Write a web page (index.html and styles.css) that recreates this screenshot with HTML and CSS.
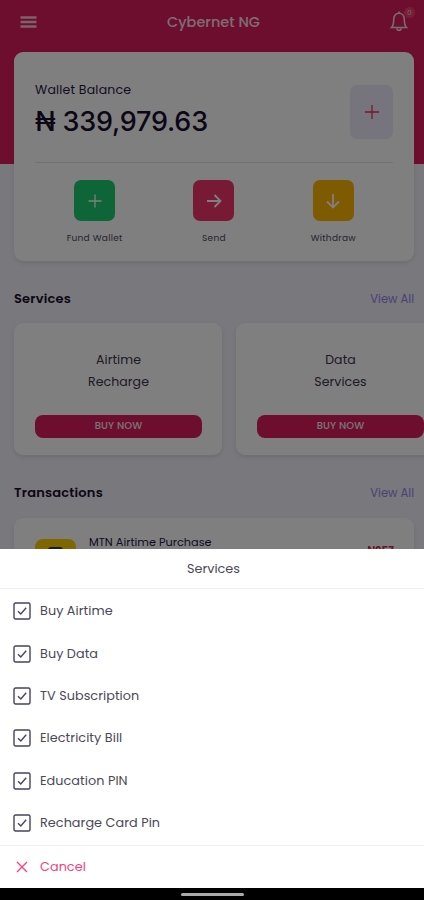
FILE: index.html
```html
<!DOCTYPE html>
<html lang="en">
<head>
<meta charset="utf-8">
<title>Cybernet NG</title>
<link rel="stylesheet" href="styles.css">
</head>
<body>
<div class="screen">
  <header class="topbar">
    <svg class="menu" viewBox="0 0 18 12"><path d="M.5 1.500h16M.5 6h16M.5 10.500h16"/></svg>
    <h1>Cybernet NG</h1>
    <div class="notify">
      <svg class="bell" viewBox="0 0 18 22"><path d="M1.500 16.500C3.300 14.800 3.700 12.500 3.700 8.500C3.700 4.800 5.800 2.300 9 2.300S14.300 4.800 14.300 8.500C14.300 12.500 14.700 14.800 16.500 16.500Z"/><path d="M6.500 17.500q2.500 4 5 0M9 .5v2"/></svg>
      <span class="badge">0</span>
    </div>
  </header>
  <section class="wallet card">
    <div class="balance">
      <div>
        <p class="label">Wallet Balance</p>
        <p class="amount">₦ 339,979.63</p>
      </div>
      <div class="add"><svg viewBox="0 0 16 16"><path d="M8 1v14M1 8h14"/></svg></div>
    </div>
    <div class="actions">
      <div class="action"><i class="tile green"><svg viewBox="0 0 16 16"><path class="thin" d="M8 1.500v13M1.500 8h13"/></svg></i><span>Fund Wallet</span></div>
      <div class="action"><i class="tile red"><svg viewBox="0 0 16 16"><path d="M1 8h13M8.500 2L14.500 8L8.500 14"/></svg></i><span>Send</span></div>
      <div class="action"><i class="tile amber"><svg viewBox="0 0 16 16"><path d="M8 1v13M2 8.500L8 14.500L14 8.500"/></svg></i><span>Withdraw</span></div>
    </div>
  </section>
  <div class="heading"><h2>Services</h2><a>View All</a></div>
  <div class="services">
    <div class="card service"><p class="name">Airtime<br>Recharge</p><div class="buy">BUY NOW</div></div>
    <div class="card service"><p class="name">Data<br>Services</p><div class="buy">BUY NOW</div></div>
  </div>
  <div class="heading"><h2>Transactions</h2><a>View All</a></div>
  <div class="card transaction">
    <div class="mtn"><b></b></div>
    <p>MTN Airtime Purchase</p>
    <strong>-₦957</strong>
  </div>
  <div class="shade"></div>
  <div class="sheet">
    <div class="title">Services</div>
    <ul>
      <li><svg viewBox="0 0 18 18"><rect x="1" y="1" width="16" height="16" rx="1.500"/><path d="M5 9.200L7.800 12L13.200 5.800"/></svg><span>Buy Airtime</span></li>
      <li><svg viewBox="0 0 18 18"><rect x="1" y="1" width="16" height="16" rx="1.500"/><path d="M5 9.200L7.800 12L13.200 5.800"/></svg><span>Buy Data</span></li>
      <li><svg viewBox="0 0 18 18"><rect x="1" y="1" width="16" height="16" rx="1.500"/><path d="M5 9.200L7.800 12L13.200 5.800"/></svg><span>TV Subscription</span></li>
      <li><svg viewBox="0 0 18 18"><rect x="1" y="1" width="16" height="16" rx="1.500"/><path d="M5 9.200L7.800 12L13.200 5.800"/></svg><span>Electricity Bill</span></li>
      <li><svg viewBox="0 0 18 18"><rect x="1" y="1" width="16" height="16" rx="1.500"/><path d="M5 9.200L7.800 12L13.200 5.800"/></svg><span>Education PIN</span></li>
      <li><svg viewBox="0 0 18 18"><rect x="1" y="1" width="16" height="16" rx="1.500"/><path d="M5 9.200L7.800 12L13.200 5.800"/></svg><span>Recharge Card Pin</span></li>
    </ul>
    <div class="cancel"><svg viewBox="0 0 18 18"><path d="M4 4L14 14M14 4L4 14"/></svg><span>Cancel</span></div>
    <div class="navbar"><b></b></div>
  </div>
</div>
</body>
</html>
```
FILE: styles.css
```css
* { box-sizing: border-box; margin: 0; padding: 0; }
body { font-family: Poppins, Inter, sans-serif; font-size: 13px; color: #27173e; }
svg { fill: none; stroke: currentColor; display: block; }
.screen { position: relative; width: 424px; height: 900px; overflow: hidden; background: linear-gradient(#dc1c5c 164px, #f2f0fa 164px); }
.topbar { height: 52px; padding: 0 14px 9px 20px; display: grid; grid-template-columns: 40px 1fr 40px; align-items: center; color: #fff; }
.menu { width: 18px; height: 12px; stroke-width: 2.4; opacity: .75; }
h1 { font-size: 14.4px; font-weight: 500; text-align: center; letter-spacing: .05px; line-height: 20px; opacity: .85; padding-right: 3px; }
.notify { position: relative; justify-self: end; color: #e8dce4; margin-right: 1px; }
.bell { width: 20px; height: 22px; stroke-width: 1.6; }
.badge { position: absolute; left: 15px; top: -4px; width: 11px; height: 11px; border-radius: 6px; background: #f03c6c; font-size: 7px; line-height: 11px; text-align: center; }
.card { background: #fff; border-radius: 9px; box-shadow: 0 2px 4px rgba(0,0,0,.1); }
.wallet { margin: 0 10px 0 14px; height: 209px; padding: 0 21px 0 21px; }
.balance { height: 111px; padding-top: 28px; display: flex; justify-content: space-between; border-bottom: 1px solid #e4e4e8; }
.label { font-size: 12.5px; line-height: 20px; letter-spacing: .2px; }
.amount { font-size: 27px; font-weight: 500; line-height: 36px; margin-top: 4px; letter-spacing: -.2px; white-space: nowrap; font-family: Inter, sans-serif; color: #180e2c; }
.add { width: 43px; height: 54px; margin-top: 5px; border-radius: 7px; background: #ece8fa; color: #f02c5c; display: grid; place-items: center; }
.add svg { width: 16px; height: 16px; stroke-width: 1.3; }
.actions { display: grid; grid-template-columns: repeat(3, 1fr); padding-top: 17px; }
.action { display: flex; flex-direction: column; align-items: center; font-size: 9px; line-height: 14px; letter-spacing: .3px; color: #4c4858; }
.tile { width: 41px; height: 41px; border-radius: 7px; display: grid; place-items: center; color: #fff; margin-bottom: 10px; }
.tile svg { width: 16px; height: 16px; stroke-width: 1.8; }
.tile .thin { stroke-width: 1.3; }
.green { background: #1dcc70; }
.red { background: #f0346c; }
.amber { background: #fdb400; }
.heading { display: flex; justify-content: space-between; align-items: center; height: 62px; padding: 13px 10px 0 14px; }
h2 { font-size: 13px; font-weight: 600; letter-spacing: .2px; color: #180e2c; }
.heading a { font-size: 11.5px; color: #9484e8; padding-top: 1px; }
.services { display: flex; gap: 14px; padding-left: 14px; }
.service { width: 208px; height: 132px; flex: none; padding: 26px 20px 0 21px; text-align: center; }
.name { font-size: 12.5px; line-height: 22px; letter-spacing: .1px; color: #3c3448; }
.buy { margin-top: 22px; height: 23px; border-radius: 8px; background: #dc1c5c; color: #f0e8ee; font-size: 10px; font-weight: 500; line-height: 22px; letter-spacing: .1px; }
.transaction { height: 90px; margin: 1px 10px 0 14px; padding: 18px 20px 0 21px; display: flex; }
.mtn { width: 41px; height: 41px; margin-top: 3px; border-radius: 8px; background: #ffcc00; padding-top: 8px; }
.mtn b { display: block; width: 15px; height: 16px; margin: 0 auto; border-radius: 3px; background: #204060; }
.transaction p { margin-left: 13px; font-size: 11.3px; line-height: 13px; white-space: nowrap; }
.transaction strong { margin: 7px 0 0 auto; font-size: 10.5px; line-height: 16px; color: #e01c50; }
.shade { position: absolute; inset: 0; background: rgba(0,0,0,.5); }
.sheet { position: absolute; left: 0; right: 0; top: 548.5px; bottom: 0; background: #fff; color: #4c4858; display: flex; flex-direction: column; }
.title { height: 40px; line-height: 40px; font-size: 12.8px; text-align: center; border-bottom: 1px solid #f0f0f3; padding-left: 3px; }
ul { list-style: none; height: 257px; border-bottom: 1px solid #f0f0f3; display: grid; grid-template-rows: repeat(6, 42.4px); padding-top: 1.6px; }
li, .cancel { display: flex; align-items: center; gap: 9px; padding-left: 13px; font-size: 12.8px; letter-spacing: .05px; }
li svg, .cancel svg { width: 18px; height: 18px; stroke-width: 1.4; color: #4a4260; }
.cancel { height: 42px; color: #f4447c; }
.cancel svg { color: #f4447c; }
.navbar { flex: 1; background: #000; padding-top: 5px; }
.navbar b { display: block; width: 63px; height: 3px; border-radius: 2px; background: #aaa; margin: 0 auto; }
```
